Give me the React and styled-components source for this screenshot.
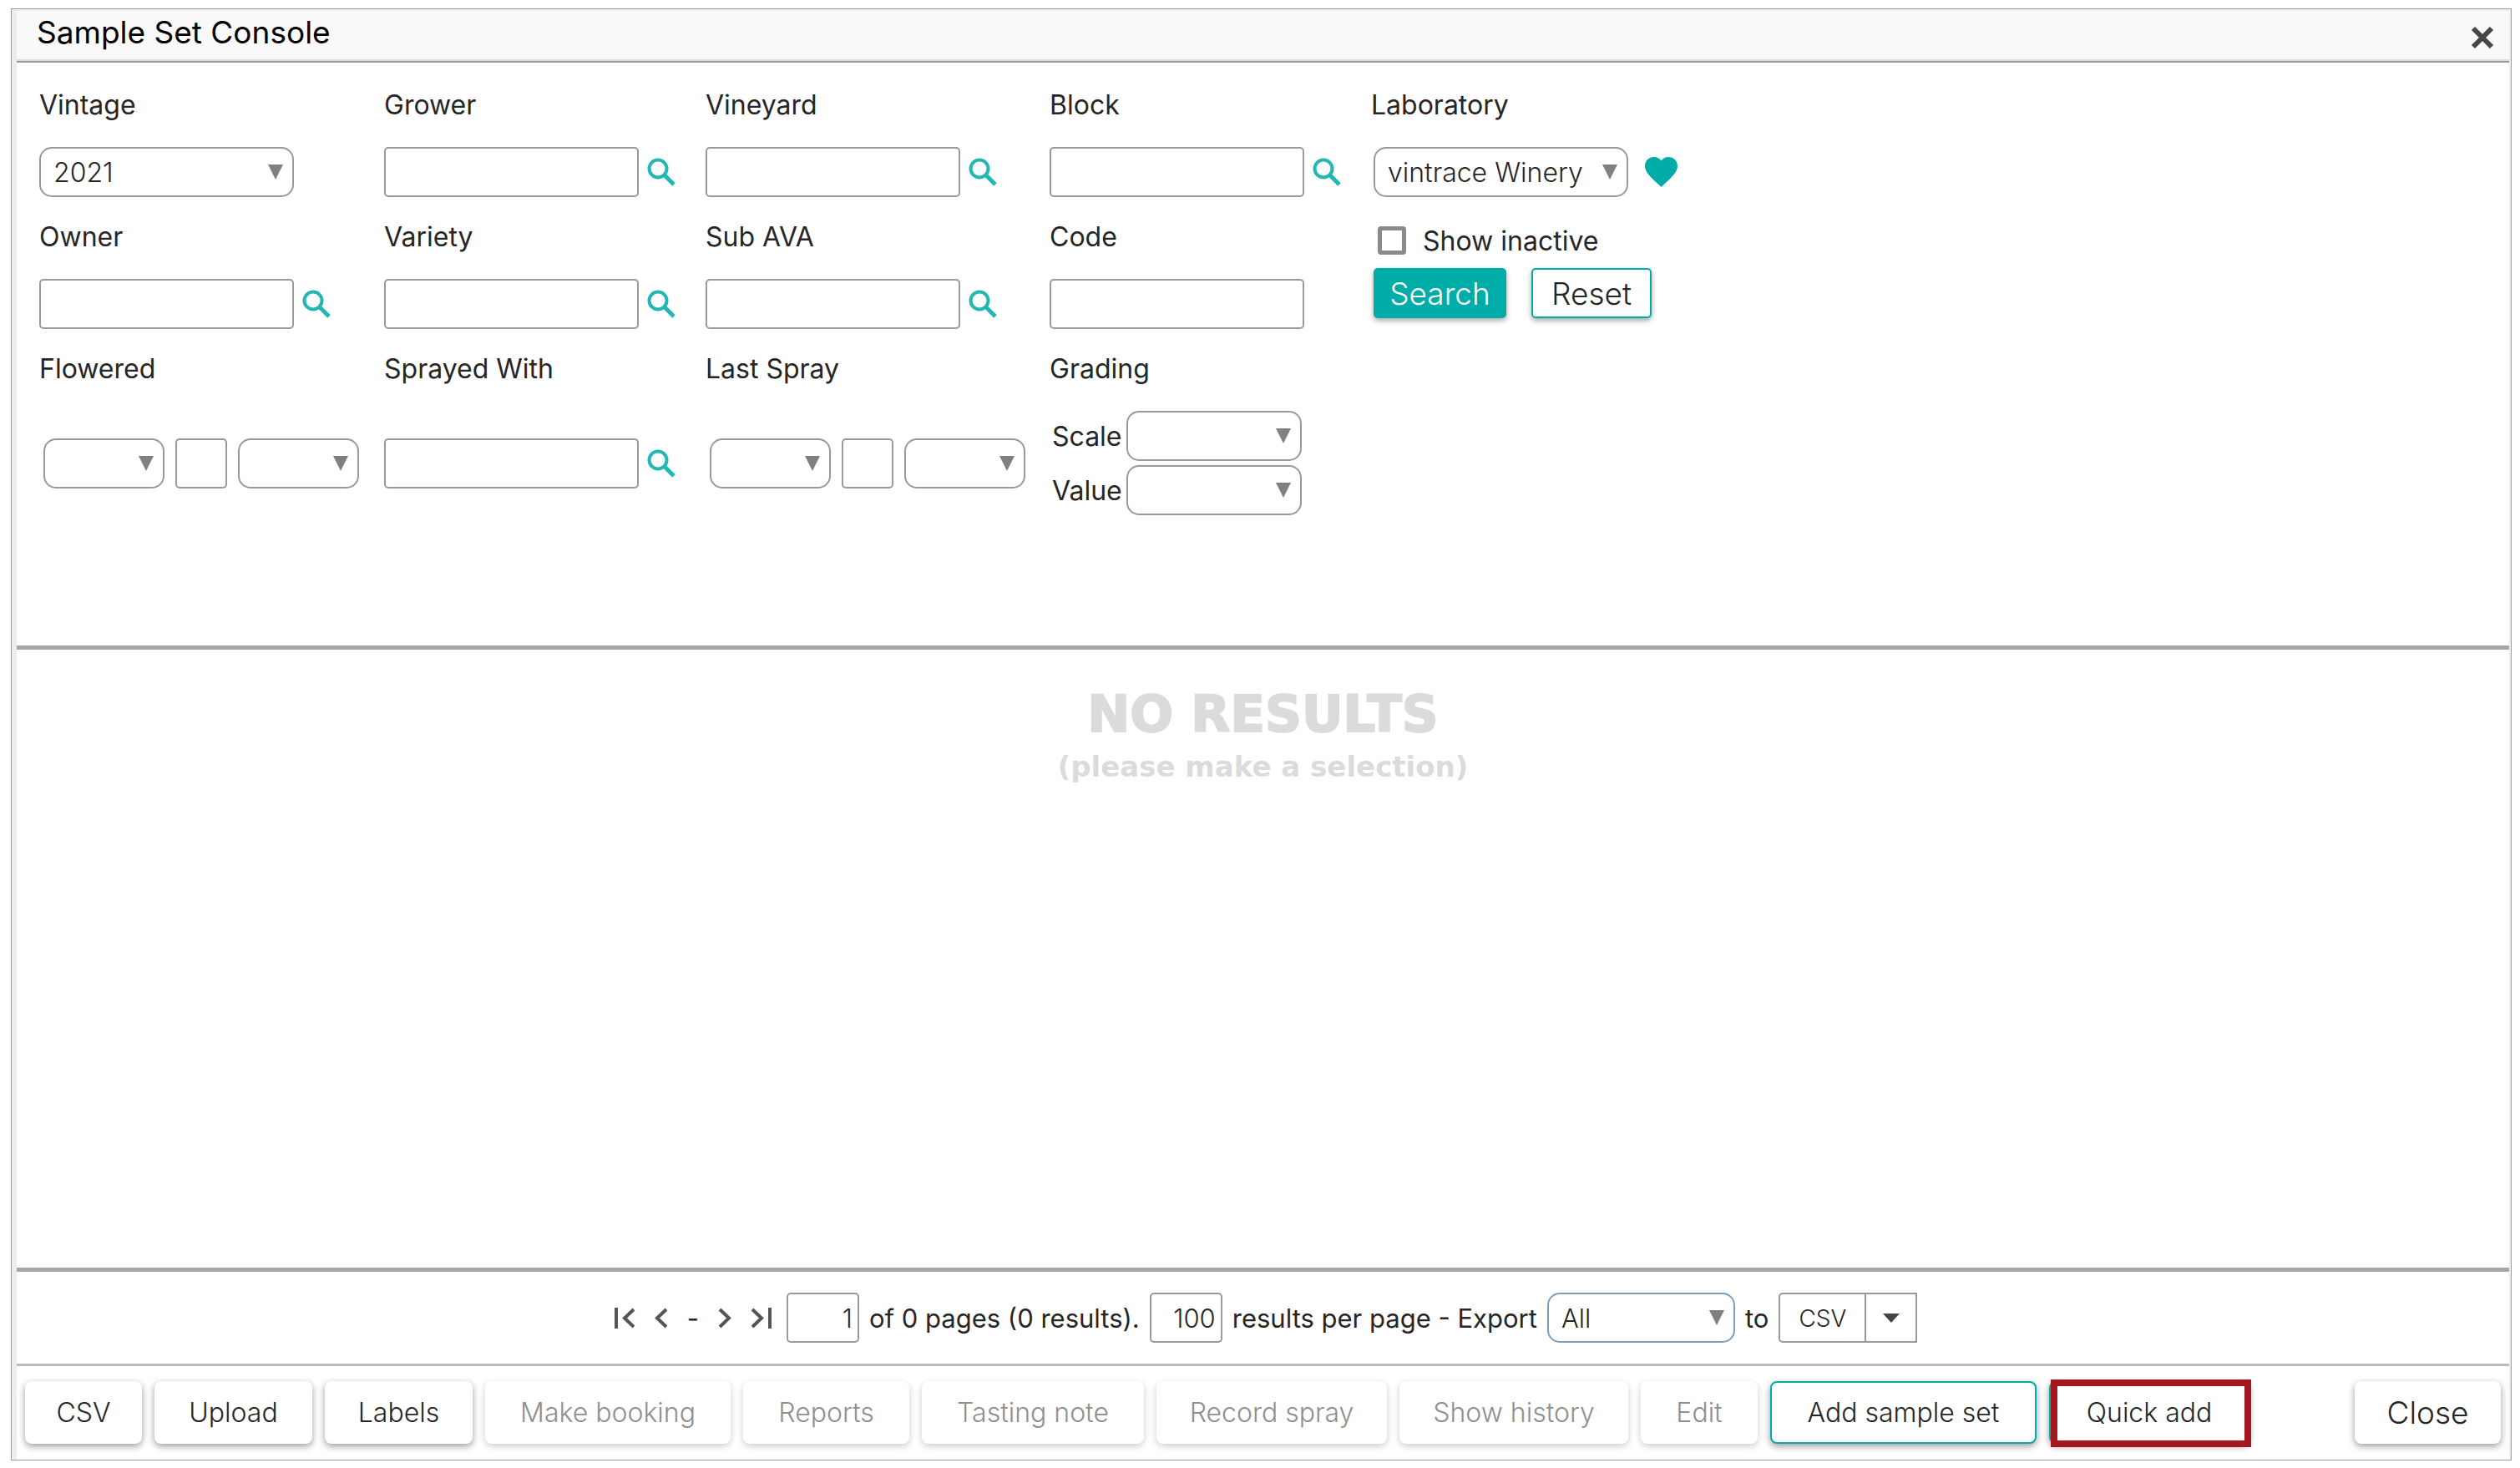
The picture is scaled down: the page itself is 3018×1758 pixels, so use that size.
import React from "react";
import styled, { createGlobalStyle, css } from "styled-components";

const GlobalStyle = createGlobalStyle`
  * {
    box-sizing: border-box;
  }
  body {
    margin: 0;
    background-color: #fff;
    color: #262626;
    font-family: "Inter", "Liberation Sans", sans-serif;
    font-size: 32px;
  }
  button, input, select {
    margin: 0;
    font-family: inherit;
    font-size: inherit;
    font-weight: 300;
    color: inherit;
  }
`;

const Window = styled.div`
  display: flex;
  flex-direction: column;
  min-height: calc(100vh - 19px);
  margin: 10px 10px 9px 13px;
  padding: 2px 2px 0 6px;
  border: 1px solid #9c9c9c;
  background-color: #ededed;
`;

const TitleBar = styled.header`
  display: flex;
  align-items: center;
  justify-content: space-between;
  height: 62px;
  padding: 4px 17px 0 24px;
  background-color: #f9f9f9;
  border-bottom: 2px solid #999;
  box-shadow: inset 0 -2px 0 #dcdcdc;
`;

const Title = styled.h1`
  margin: 0;
  padding-bottom: 12px;
  color: #000;
  font-size: 37px;
  font-weight: 400;
  line-height: 40px;
`;

const IconButton = styled.button`
  display: flex;
  align-items: center;
  justify-content: center;
  padding: 0;
  border: 0;
  background: none;
  cursor: pointer;
`;

const Filters = styled.form`
  display: grid;
  grid-template-columns: 413px 385px 412px 385px 1fr;
  row-gap: 28px;
  padding: 31px 27px 156px;
  background-color: #fff;
`;

const Field = styled.div`
  display: flex;
  flex-direction: column;
`;

const Label = styled.label`
  margin-bottom: 30px;
  line-height: 40px;
`;

const Controls = styled.div`
  display: flex;
  flex: 1;
  align-items: center;
  gap: ${(props) => props.$gap || 10}px;
  padding-left: ${(props) => props.$indent || 0}px;
`;

const box = css`
  height: 60px;
  width: ${(props) => props.$width || 305}px;
  border: 2px solid #999;
  background-color: #fff;
  outline: none;
`;

const TextBox = styled.input`
  ${box}
  padding: 0 6px;
  border-radius: 5px;
  text-align: ${(props) => props.$align || "left"};
`;

const Select = styled.select`
  ${box}
  padding: 0 36px 0 15px;
  border-radius: 15px;
  border-color: ${(props) => (props.$focused ? "#7d9dbd" : "#999")};
  appearance: none;
  background-image: url("data:image/svg+xml,%3Csvg xmlns='http://www.w3.org/2000/svg' width='18' height='18'%3E%3Cpath d='M0 0h18L9 18z' fill='%23808080'/%3E%3C/svg%3E");
  background-repeat: no-repeat;
  background-position: right 11px center;
`;

const GradingRows = styled.div`
  display: flex;
  flex-direction: column;
  gap: 5px;
  padding-left: 3px;
`;

const GradingRow = styled.label`
  display: grid;
  grid-template-columns: 89px 210px;
  align-items: center;
`;

const SearchArea = styled.div`
  display: flex;
  flex-direction: column;
  gap: 16px;
  padding: 7px 0 0 3px;
`;

const CheckLabel = styled.label`
  display: flex;
  align-items: center;
  gap: 20px;
  height: 34px;
  padding-left: 5px;
`;

const CheckBox = styled.input`
  appearance: none;
  width: 34px;
  height: 34px;
  margin: 0;
  border: 5px solid #8a8a8a;
  border-radius: 4px;
`;

const Actions = styled.div`
  display: flex;
  gap: 30px;
`;

const ActionButton = styled.button`
  width: ${(props) => props.$width}px;
  height: 60px;
  padding: 0;
  border: 2px solid #00aca8;
  border-radius: 5px;
  background-color: ${(props) => (props.$primary ? "#00aca8" : "#fff")};
  color: ${(props) => (props.$primary ? "#fff" : "#262626")};
  font-size: 37px;
  box-shadow: 0 3px 6px rgba(0, 0, 0, 0.35);
`;

const Results = styled.main`
  flex: 1;
  padding-top: 45px;
  border-top: 5px solid #aaa6a3;
  border-bottom: 5px solid #aaa6a3;
  background-color: #fff;
  color: #dbdbdb;
  font-family: "DejaVu Sans", sans-serif;
  font-weight: 700;
  text-align: center;
`;

const NoResults = styled.div`
  font-size: 61px;
  line-height: 64px;
  -webkit-text-stroke: 2px #dbdbdb;
`;

const NoResultsHint = styled.div`
  font-size: 34px;
  line-height: 62px;
`;

const Pager = styled.nav`
  display: flex;
  align-items: center;
  justify-content: center;
  gap: 12px;
  height: 113px;
  padding-left: 6px;
  border-bottom: 3px solid #bbb;
  background-color: #fff;
  font-size: 31px;
`;

const PageArrows = styled.div`
  display: flex;
  align-items: center;
  gap: 23px;
  margin-right: 5px;
`;

const SplitButton = styled.div`
  display: flex;
  height: 60px;
  border: 2px solid #999;
  border-radius: 5px 0 0 5px;
`;

const SplitMain = styled.button`
  width: 101px;
  padding: 2px 0 0;
  border: 0;
  background: none;
  font-size: 28px;
`;

const SplitToggle = styled(IconButton)`
  width: 61px;
  border-left: 2px solid #999;
`;

const Footer = styled.footer`
  display: flex;
  gap: 15px;
  padding: 18px 10px 19px;
  background-color: #fff;
`;

const FooterButton = styled.button`
  width: ${(props) => props.$width}px;
  height: 75px;
  padding: 0;
  border: ${(props) => (props.$outlined ? "2px solid #00aca8" : "0")};
  border-radius: 8px;
  background-color: #fff;
  box-shadow: 0 3px 8px rgba(0, 0, 0, 0.4);
  &:disabled {
    color: #8f8f8f;
    box-shadow: 0 3px 8px rgba(0, 0, 0, 0.2);
  }
`;

const CloseButton = styled(FooterButton)`
  margin-left: auto;
  font-size: 37px;
`;

const Highlight = styled.div`
  position: relative;
  &::after {
    content: "";
    position: absolute;
    inset: -2px -2px -4px 2px;
    border: 8px solid #a3171e;
    pointer-events: none;
  }
`;

const SearchIcon = () => (
  <svg width="34" height="34" viewBox="0 0 34 34" fill="none" stroke="#22b7b2" strokeWidth="4">
    <circle cx="13" cy="13" r="10.5" />
    <path d="M20.5 20.5 32 32" strokeWidth="5" />
  </svg>
);

const HeartIcon = () => (
  <svg width="39" height="36" viewBox="2 3 20 18.35" fill="#00aca8">
    <path d="m12 21.35-1.45-1.32C5.4 15.36 2 12.28 2 8.5 2 5.42 4.42 3 7.5 3c1.74 0 3.41.81 4.5 2.09C13.09 3.81 14.76 3 16.5 3 19.58 3 22 5.42 22 8.5c0 3.78-3.4 6.86-8.55 11.54z" />
  </svg>
);

const CloseIcon = () => (
  <svg width="30" height="30" viewBox="0 0 30 30" stroke="#444746" strokeWidth="6">
    <path d="M4 4 26 26M26 4 4 26" />
  </svg>
);

const ArrowIcon = ({ d, width }) => (
  <svg width={width} height="25" viewBox={`0 0 ${width} 25`} fill="none" stroke="#555" strokeWidth="4">
    <path d={d} />
  </svg>
);

const LookupField = ({ id, label, lookup = true }) => (
  <Field>
    <Label htmlFor={id}>{label}</Label>
    <Controls>
      <TextBox id={id} type="text" />
      {lookup && (
        <IconButton type="button" aria-label={`Find ${label}`}>
          <SearchIcon />
        </IconButton>
      )}
    </Controls>
  </Field>
);

const DateField = ({ id, label }) => (
  <Field>
    <Label htmlFor={id}>{label}</Label>
    <Controls $gap={13} $indent={5}>
      <Select id={id} $width={145} />
      <TextBox $width={62} aria-label={`${label} amount`} />
      <Select $width={145} aria-label={`${label} unit`} />
    </Controls>
  </Field>
);

const footerButtons = [
  { label: "CSV", width: 140 },
  { label: "Upload", width: 189 },
  { label: "Labels", width: 177 },
  { label: "Make booking", width: 294, disabled: true },
  { label: "Reports", width: 199, disabled: true },
  { label: "Tasting note", width: 266, disabled: true },
  { label: "Record spray", width: 276, disabled: true },
  { label: "Show history", width: 274, disabled: true },
  { label: "Edit", width: 140, disabled: true },
];

const App = () => {
  return (
    <>
      <GlobalStyle />
      <Window>
        <TitleBar>
          <Title>Sample Set Console</Title>
          <IconButton aria-label="Close window">
            <CloseIcon />
          </IconButton>
        </TitleBar>

        <Filters onSubmit={(e) => e.preventDefault()}>
          <Field>
            <Label htmlFor="vintage">Vintage</Label>
            <Controls>
              <Select id="vintage">
                <option>2021</option>
              </Select>
            </Controls>
          </Field>
          <LookupField id="grower" label="Grower" />
          <LookupField id="vineyard" label="Vineyard" />
          <LookupField id="block" label="Block" />
          <Field>
            <Label htmlFor="laboratory">Laboratory</Label>
            <Controls $gap={20} $indent={3}>
              <Select id="laboratory">
                <option>vintrace Winery</option>
              </Select>
              <IconButton type="button" aria-label="Favourite">
                <HeartIcon />
              </IconButton>
            </Controls>
          </Field>

          <LookupField id="owner" label="Owner" />
          <LookupField id="variety" label="Variety" />
          <LookupField id="subAva" label="Sub AVA" />
          <LookupField id="code" label="Code" lookup={false} />
          <SearchArea>
            <CheckLabel>
              <CheckBox type="checkbox" />
              Show inactive
            </CheckLabel>
            <Actions>
              <ActionButton type="submit" $primary $width={159}>
                Search
              </ActionButton>
              <ActionButton type="reset" $width={144}>
                Reset
              </ActionButton>
            </Actions>
          </SearchArea>

          <DateField id="flowered" label="Flowered" />
          <LookupField id="sprayedWith" label="Sprayed With" />
          <DateField id="lastSpray" label="Last Spray" />
          <Field>
            <Label as="div">Grading</Label>
            <GradingRows>
              <GradingRow>
                Scale
                <Select $width={210} />
              </GradingRow>
              <GradingRow>
                Value
                <Select $width={210} />
              </GradingRow>
            </GradingRows>
          </Field>
        </Filters>

        <Results>
          <NoResults>NO RESULTS</NoResults>
          <NoResultsHint>(please make a selection)</NoResultsHint>
        </Results>

        <Pager>
          <PageArrows>
            <IconButton aria-label="First page">
              <ArrowIcon width={26} d="M3 0V25M24 2 13 12.5 24 23" />
            </IconButton>
            <IconButton aria-label="Previous page">
              <ArrowIcon width={16} d="M14 2 3 12.5 14 23" />
            </IconButton>
            <span>-</span>
            <IconButton aria-label="Next page">
              <ArrowIcon width={16} d="M2 2 13 12.5 2 23" />
            </IconButton>
            <IconButton aria-label="Last page">
              <ArrowIcon width={26} d="M23 0V25M2 2 13 12.5 2 23" />
            </IconButton>
          </PageArrows>
          <TextBox $width={87} $align="right" defaultValue="1" aria-label="Page" />
          <span>of 0 pages (0 results).</span>
          <TextBox $width={87} $align="right" defaultValue="100" id="pageSize" />
          <label htmlFor="pageSize">results per page - Export</label>
          <Select $width={225} $focused aria-label="Export">
            <option>All</option>
          </Select>
          <span>to</span>
          <SplitButton>
            <SplitMain>CSV</SplitMain>
            <SplitToggle aria-label="Export formats">
              <svg width="20" height="11" viewBox="0 0 20 11" fill="#444">
                <path d="M0 0h20L10 11z" />
              </svg>
            </SplitToggle>
          </SplitButton>
        </Pager>

        <Footer>
          {footerButtons.map(({ label, width, disabled }) => (
            <FooterButton key={label} $width={width} disabled={disabled}>
              {label}
            </FooterButton>
          ))}
          <FooterButton $width={319} $outlined>
            Add sample set
          </FooterButton>
          <Highlight>
            <FooterButton $width={240} $outlined>
              Quick add
            </FooterButton>
          </Highlight>
          <CloseButton $width={175}>Close</CloseButton>
        </Footer>
      </Window>
    </>
  );
};

export default App;
